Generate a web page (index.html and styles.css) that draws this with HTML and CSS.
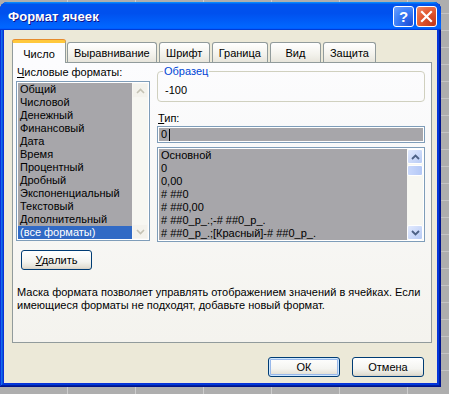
FILE: index.html
```html
<!DOCTYPE html>
<html lang="ru">
<head>
    <meta charset="UTF-8">
    <title>Формат ячеек</title>
    <link rel="stylesheet" href="styles.css">
</head>
<body>
    <div class="window">
        <div class="titlebar">
            <span class="title">Формат ячеек</span>
            <div class="title-buttons">
                <span class="tb-btn help">?</span>
                <span class="tb-btn close">
                    <svg width="13" height="13" viewBox="0 0 13 13"><path d="M2 2 L11 11 M11 2 L2 11" stroke="#fff" stroke-width="2.2" stroke-linecap="square"/></svg>
                </span>
            </div>
        </div>
        <div class="client">
            <div class="tabs">
                <div class="tab active">Число</div>
                <div class="tab">Выравнивание</div>
                <div class="tab">Шрифт</div>
                <div class="tab">Граница</div>
                <div class="tab">Вид</div>
                <div class="tab">Защита</div>
            </div>
            <div class="panel">
                <div class="columns">
                    <div class="left-col">
                        <div class="label"><u>Ч</u>исловые форматы:</div>
                        <div class="listbox categories">
                            <div class="items">
                                <div class="item">Общий</div>
                                <div class="item">Числовой</div>
                                <div class="item">Денежный</div>
                                <div class="item">Финансовый</div>
                                <div class="item">Дата</div>
                                <div class="item">Время</div>
                                <div class="item">Процентный</div>
                                <div class="item">Дробный</div>
                                <div class="item">Экспоненциальный</div>
                                <div class="item">Текстовый</div>
                                <div class="item">Дополнительный</div>
                                <div class="item selected">(все форматы)</div>
                            </div>
                            <div class="scrollbar disabled">
                                <span class="arrow"><svg width="9" height="6" viewBox="0 0 9 6"><path d="M1 5 L4.5 1.5 L8 5" fill="none" stroke="#c4c2b4" stroke-width="1.6"/></svg></span>
                                <span class="track"></span>
                                <span class="arrow"><svg width="9" height="6" viewBox="0 0 9 6"><path d="M1 1 L4.5 4.5 L8 1" fill="none" stroke="#c4c2b4" stroke-width="1.6"/></svg></span>
                            </div>
                        </div>
                    </div>
                    <div class="right-col">
                        <fieldset class="sample">
                            <legend>Образец</legend>
                            <div class="sample-value">-100</div>
                        </fieldset>
                        <div class="label type-label"><u>Т</u>ип:</div>
                        <div class="textbox"><div class="textbox-fill">0<span class="caret"></span></div></div>
                        <div class="listbox types">
                            <div class="items">
                                <div class="item">Основной</div>
                                <div class="item">0</div>
                                <div class="item">0,00</div>
                                <div class="item"># ##0</div>
                                <div class="item"># ##0,00</div>
                                <div class="item"># ##0_р_.;-# ##0_р_.</div>
                                <div class="item"># ##0_р_.;[Красный]-# ##0_р_.</div>
                            </div>
                            <div class="scrollbar">
                                <span class="arrow"><svg width="9" height="6" viewBox="0 0 9 6"><path d="M1 5 L4.5 1.5 L8 5" fill="none" stroke="#4d6185" stroke-width="1.8"/></svg></span>
                                <span class="thumb"></span>
                                <span class="track"></span>
                                <span class="arrow"><svg width="9" height="6" viewBox="0 0 9 6"><path d="M1 1 L4.5 4.5 L8 1" fill="none" stroke="#4d6185" stroke-width="1.8"/></svg></span>
                            </div>
                        </div>
                    </div>
                </div>
                <button class="btn delete-btn"><u>У</u>далить</button>
                <p class="hint">Маска формата позволяет управлять отображением значений в ячейках. Если<br>имеющиеся форматы не подходят, добавьте новый формат.</p>
            </div>
            <div class="dialog-buttons">
                <button class="btn default">ОК</button>
                <button class="btn">Отмена</button>
            </div>
        </div>
    </div>
</body>
</html>
```

FILE: styles.css
```css
body {
    margin: 0;
    font-family: "Liberation Sans", Arial, sans-serif;
    font-size: 11px;
    color: #000;
    background-color: #aeaeae;
    background-image:
        repeating-linear-gradient(90deg, transparent 0, transparent 67px, #cdcdcd 67px, #cdcdcd 68px),
        repeating-linear-gradient(0deg, transparent 0, transparent 16px, #c4c4c4 16px, #c4c4c4 17px);
}

.window {
    width: 441px;
    height: 385px;
    margin-top: 2px;
    box-sizing: border-box;
    display: flex;
    flex-direction: column;
    background: #0831d9;
    border-radius: 8px 8px 0 0;
    box-shadow: inset -1px -1px #00138c, inset 1px 1px #0831d9, inset -2px -2px #001ea0, inset 2px 2px #166aee, inset -3px -3px #003bda, inset 3px 3px #0855dd;
}

.titlebar {
    height: 28px;
    flex-shrink: 0;
    display: flex;
    align-items: center;
    justify-content: space-between;
    padding: 0 4px 0 8px;
    border-radius: 8px 8px 0 0;
    background: linear-gradient(180deg, #0997ff, #0053ee 8%, #0050ee 40%, #06f 88%, #06f 93%, #005bff 95%, #003dd7 96%, #003dd7);
}

.title {
    color: #fff;
    font-weight: bold;
    font-size: 13px;
    text-shadow: 1px 1px #0f1089;
    letter-spacing: 0.1px;
}

.title-buttons {
    display: flex;
    gap: 2px;
    padding-top: 1px;
}

.tb-btn {
    width: 21px;
    height: 21px;
    box-sizing: border-box;
    border: 1px solid #fff;
    border-radius: 3px;
    display: flex;
    align-items: center;
    justify-content: center;
}

.help {
    background: radial-gradient(circle at 85% 90%, #1f4fd8 0, #3a7cf6 55%, #6ea3ff 100%);
    color: #fff;
    font-weight: bold;
    font-size: 15px;
}

.close {
    background: radial-gradient(circle at 85% 90%, #c3391c 0, #e0542c 50%, #f08a68 100%);
}

.client {
    flex: 1;
    margin: 0 4px 4px 4px;
    background: #ece9d8;
    padding: 10px 5px 0 8px;
    display: flex;
    flex-direction: column;
}

.tabs {
    display: flex;
    align-items: flex-end;
    gap: 2px;
    height: 22px;
}

.tab {
    position: relative;
    z-index: 1;
    height: 20px;
    min-width: 51px;
    padding: 1px 6px 0;
    box-sizing: border-box;
    display: flex;
    align-items: center;
    justify-content: center;
    border: 1px solid #919b9c;
    border-bottom: none;
    border-radius: 3px 3px 0 0;
    background: linear-gradient(#fff, #f3f2ec 60%, #e7e5dc);
}

.tab.active {
    height: 23px;
    min-width: 54px;
    margin-bottom: -1px;
    margin-right: -1px;
    background: #fcfcfe;
    border-top: 3px solid #ffc83c;
    box-shadow: 0 -1px 0 #e68b2c;
}

.panel {
    height: 281px;
    box-sizing: border-box;
    border: 1px solid #919b9c;
    background: linear-gradient(#fcfcfe, #f4f3ee);
    padding: 2px 6px 0 3px;
}

.columns {
    display: flex;
    gap: 7px;
}

.left-col {
    width: 134px;
}

.right-col {
    width: 268px;
    display: flex;
    flex-direction: column;
}

.label {
    line-height: 14px;
    padding-left: 1px;
    margin-bottom: 2px;
}

.listbox {
    display: flex;
    border: 1px solid #7f9db9;
    padding: 1px;
    background: #fff;
}

.items {
    flex: 1;
    background: #a7a6aa;
}

.item {
    height: 13px;
    line-height: 13px;
    padding-left: 2px;
    white-space: nowrap;
    overflow: hidden;
}

.item.selected {
    background: #316ac5;
    color: #fff;
}

.scrollbar {
    width: 16px;
    display: flex;
    flex-direction: column;
    background: #f7f7f2;
}

.arrow {
    height: 15px;
    box-sizing: border-box;
    border: 1px solid #fff;
    border-radius: 2px;
    background: linear-gradient(135deg, #e2eafe, #b8cbf5);
    display: flex;
    align-items: center;
    justify-content: center;
}

.scrollbar.disabled .arrow {
    background: #f3f2ec;
    border-color: #f7f6f2;
}

.track {
    flex: 1;
}

.thumb {
    height: 9px;
    margin-top: 1px;
    border: 1px solid #fff;
    border-radius: 2px;
    background: linear-gradient(90deg, #c9d8fc, #b4c8f6);
}

.sample {
    margin: 0;
    padding: 0 7px 4px;
    border: 1px solid #d0d0bf;
    border-radius: 4px;
}

.sample legend {
    color: #0046d5;
    line-height: 13px;
    padding: 0 1px;
    margin-left: -2px;
}

.sample-value {
    margin-top: 6px;
    line-height: 13px;
}

.type-label {
    margin-top: 9px;
    margin-bottom: 1px;
}

.textbox {
    border: 1px solid #7f9db9;
    padding: 1px;
    background: #fff;
}

.textbox-fill {
    height: 13px;
    line-height: 13px;
    padding-left: 2px;
    background: #a7a6aa;
    display: flex;
    align-items: center;
}

.caret {
    width: 1px;
    height: 12px;
    margin-left: 2px;
    background: #000;
}

.types {
    margin-top: 4px;
}

.btn {
    font-family: "Liberation Sans", Arial, sans-serif;
    font-size: 11px;
    color: #000;
    height: 20px;
    padding: 0;
    border: 1px solid #003c74;
    border-radius: 3px;
    background: linear-gradient(#fff, #f4f4f0 60%, #e3e0d5 90%, #d6d0c5);
    cursor: pointer;
}

.delete-btn {
    width: 71px;
    margin: 8px 0 0 5px;
    display: block;
}

.btn.default {
    box-shadow: inset 0 0 0 1px #cee7ff, inset 0 0 0 2px #98b8ea;
}

.hint {
    margin: 16px 0 0 1px;
    line-height: 13px;
    white-space: nowrap;
}

.dialog-buttons {
    display: flex;
    justify-content: flex-end;
    gap: 12px;
    margin-top: 14px;
    margin-right: 8px;
}

.dialog-buttons .btn {
    width: 72px;
}
```
